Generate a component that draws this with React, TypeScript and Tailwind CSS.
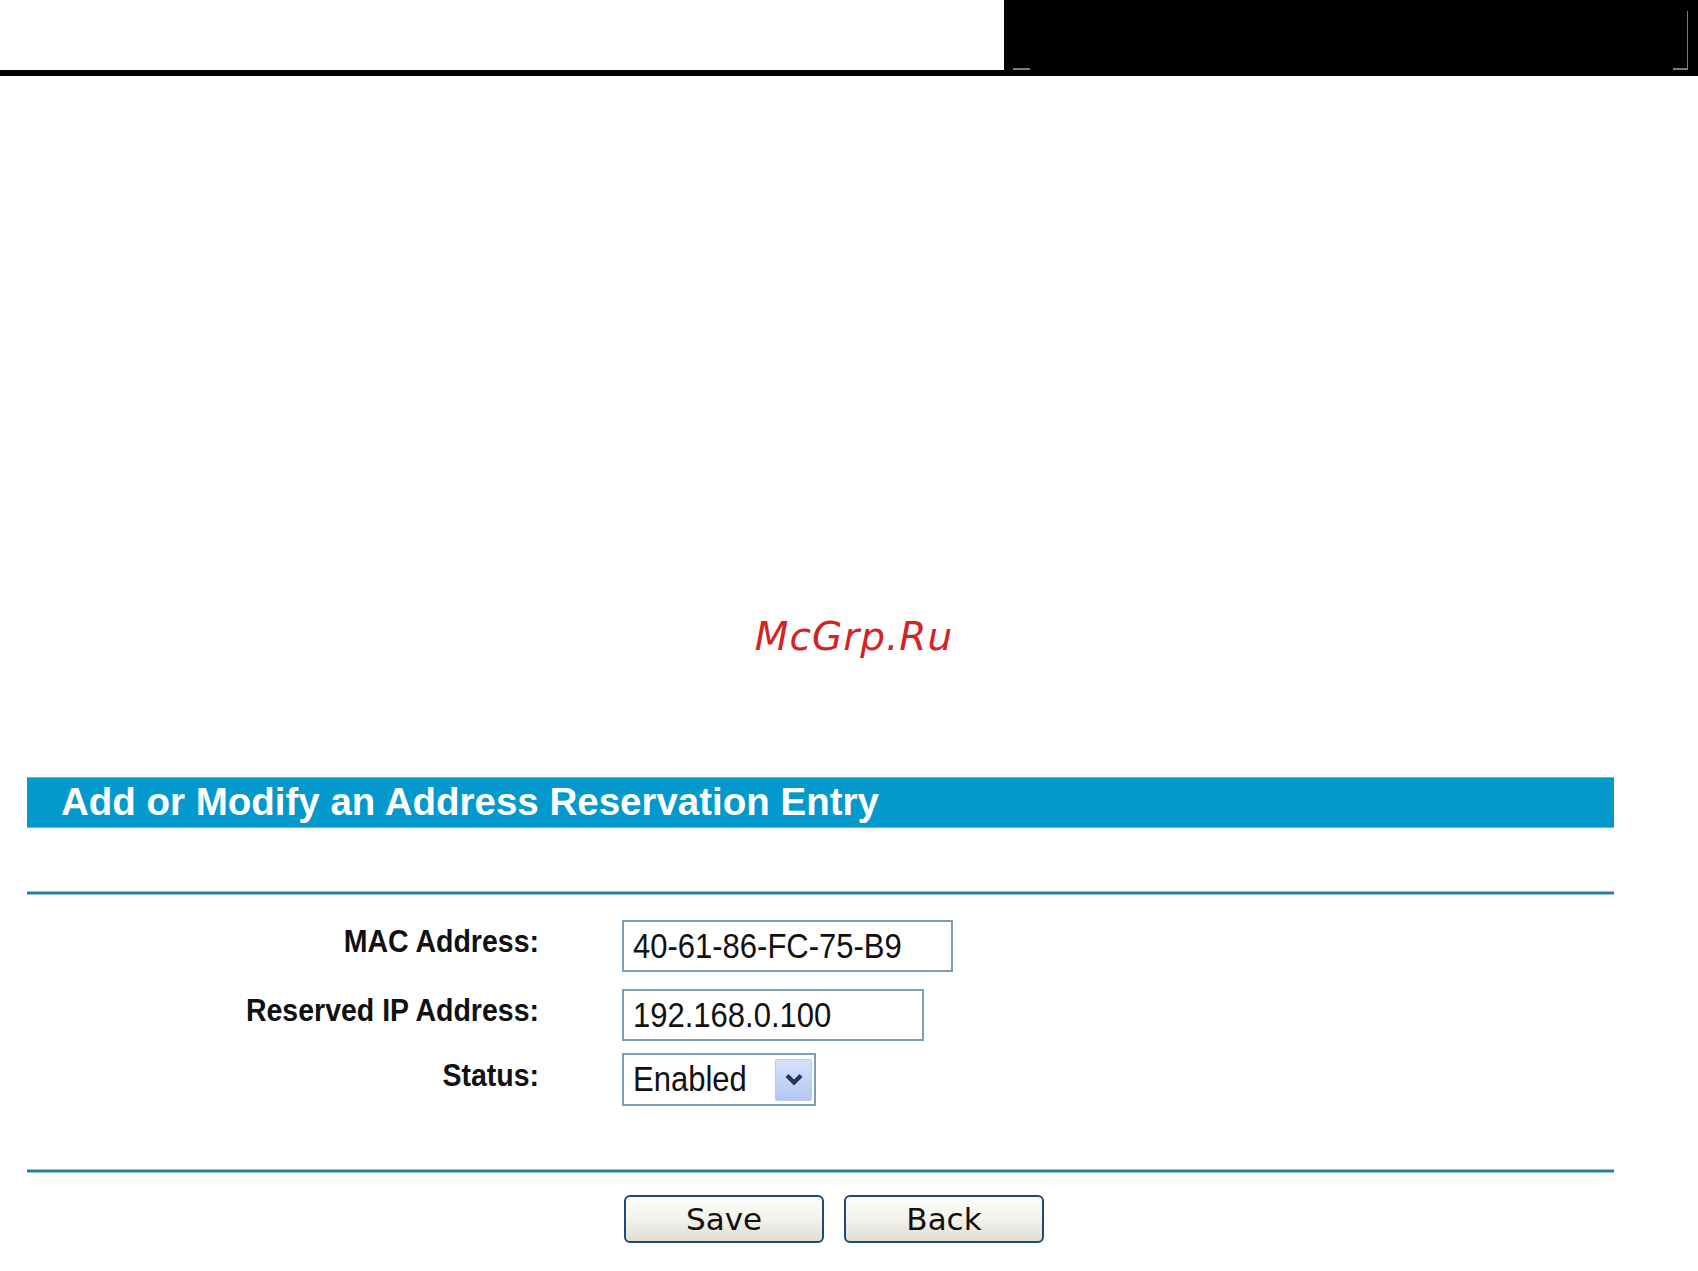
import React from 'react';

const labelCls =
  "inline-block origin-center scale-y-[1.12] text-[28.5px] font-bold text-[#111] leading-none font-['Liberation_Sans',Arial,sans-serif]";
const fieldText =
  "inline-block origin-center scale-y-[1.14] text-[31px] leading-none text-[#111] font-['Liberation_Sans',Arial,sans-serif]";

function FormRow({ label, children }: { label: string; children: React.ReactNode }) {
  return (
    <div className="grid grid-cols-[512px_1fr] items-center gap-x-[83px]">
      <div className="text-right -mt-[8px]">
        <span className={labelCls}>{label}</span>
      </div>
      <div className="flex">{children}</div>
    </div>
  );
}

function TextBox({ value, width }: { value: string; width: string }) {
  return (
    <div className={`${width} h-[52px] border-2 border-[#7f9db9] bg-white flex items-center pl-[9px]`}>
      <span className={fieldText}>{value}</span>
    </div>
  );
}

function StatusSelect() {
  return (
    <div className="w-[194px] h-[53px] border-2 border-[#7f9db9] bg-white flex items-center justify-between pl-[9px] pr-[2px]">
      <span className={fieldText}>Enabled</span>
      <span className="w-[37px] h-[42px] rounded-[2px] border border-[#b9c9ef] bg-gradient-to-b from-[#d6e1fb] to-[#b3c6f3] flex items-center justify-center">
        <svg width="20" height="13" viewBox="0 0 20 13">
          <path d="M3 2.5 L10 9.5 L17 2.5" fill="none" stroke="#24335e" strokeWidth="4.2" strokeLinejoin="miter" />
        </svg>
      </span>
    </div>
  );
}

function XpButton({ label }: { label: string }) {
  return (
    <button className="w-[200px] h-[48px] rounded-[6px] border-2 border-[#1b4a7c] bg-gradient-to-b from-[#fdfdfb] via-[#f3f2ec] to-[#e0ded3] text-[31px] leading-none text-[#111] font-['DejaVu_Sans',Tahoma,sans-serif]">
      {label}
    </button>
  );
}

function Divider() {
  return <div className="h-[4px] border-y border-[#8dbfd6] bg-[#2e7aa0]" />;
}

export default function App() {
  return (
    <div className="min-h-screen w-full bg-white">
      {/* page top strip */}
      <div className="flex h-[76px]">
        <div className="flex-1 flex flex-col">
          <div className="flex-1" />
          <div className="h-[6px] bg-black" />
        </div>
        <div className="relative w-[694px] bg-black">
          <span className="absolute left-[9px] top-[68px] h-[2px] w-[17px] bg-[#7a7a7a]" />
          <span className="absolute right-[10px] top-[11px] h-[59px] w-px bg-[#7a7a7a]" />
          <span className="absolute right-[10px] top-[68px] h-[2px] w-[15px] bg-[#7a7a7a]" />
        </div>
      </div>

      <div className="mt-[541px] flex justify-center pl-[10px]">
        <span className="text-[39px] leading-none italic text-[#d42327] tracking-[1px] font-['DejaVu_Sans',Verdana,sans-serif]">
          McGrp.Ru
        </span>
      </div>

      <div className="ml-[27px] mr-[84px] mt-[121px]">
        <div className="h-[51px] bg-[#0399cc] border-y border-[#5cb8db] flex items-center pl-[34px]">
          <h1 className="text-[38.5px] leading-none font-bold text-white font-['Liberation_Sans',Arial,sans-serif]">
            Add or Modify an Address Reservation Entry
          </h1>
        </div>

        <div className="mt-[63px]">
          <Divider />
        </div>

        <div className="mt-[25px] flex flex-col">
          <FormRow label="MAC Address:">
            <TextBox value="40-61-86-FC-75-B9" width="w-[331px]" />
          </FormRow>
          <div className="mt-[17px]">
            <FormRow label="Reserved IP Address:">
              <TextBox value="192.168.0.100" width="w-[302px]" />
            </FormRow>
          </div>
          <div className="mt-[12px]">
            <FormRow label="Status:">
              <StatusSelect />
            </FormRow>
          </div>
        </div>

        <div className="mt-[63px]">
          <Divider />
        </div>

        <div className="mt-[22px] flex gap-[20px] pl-[597px]">
          <XpButton label="Save" />
          <XpButton label="Back" />
        </div>
      </div>
    </div>
  );
}
